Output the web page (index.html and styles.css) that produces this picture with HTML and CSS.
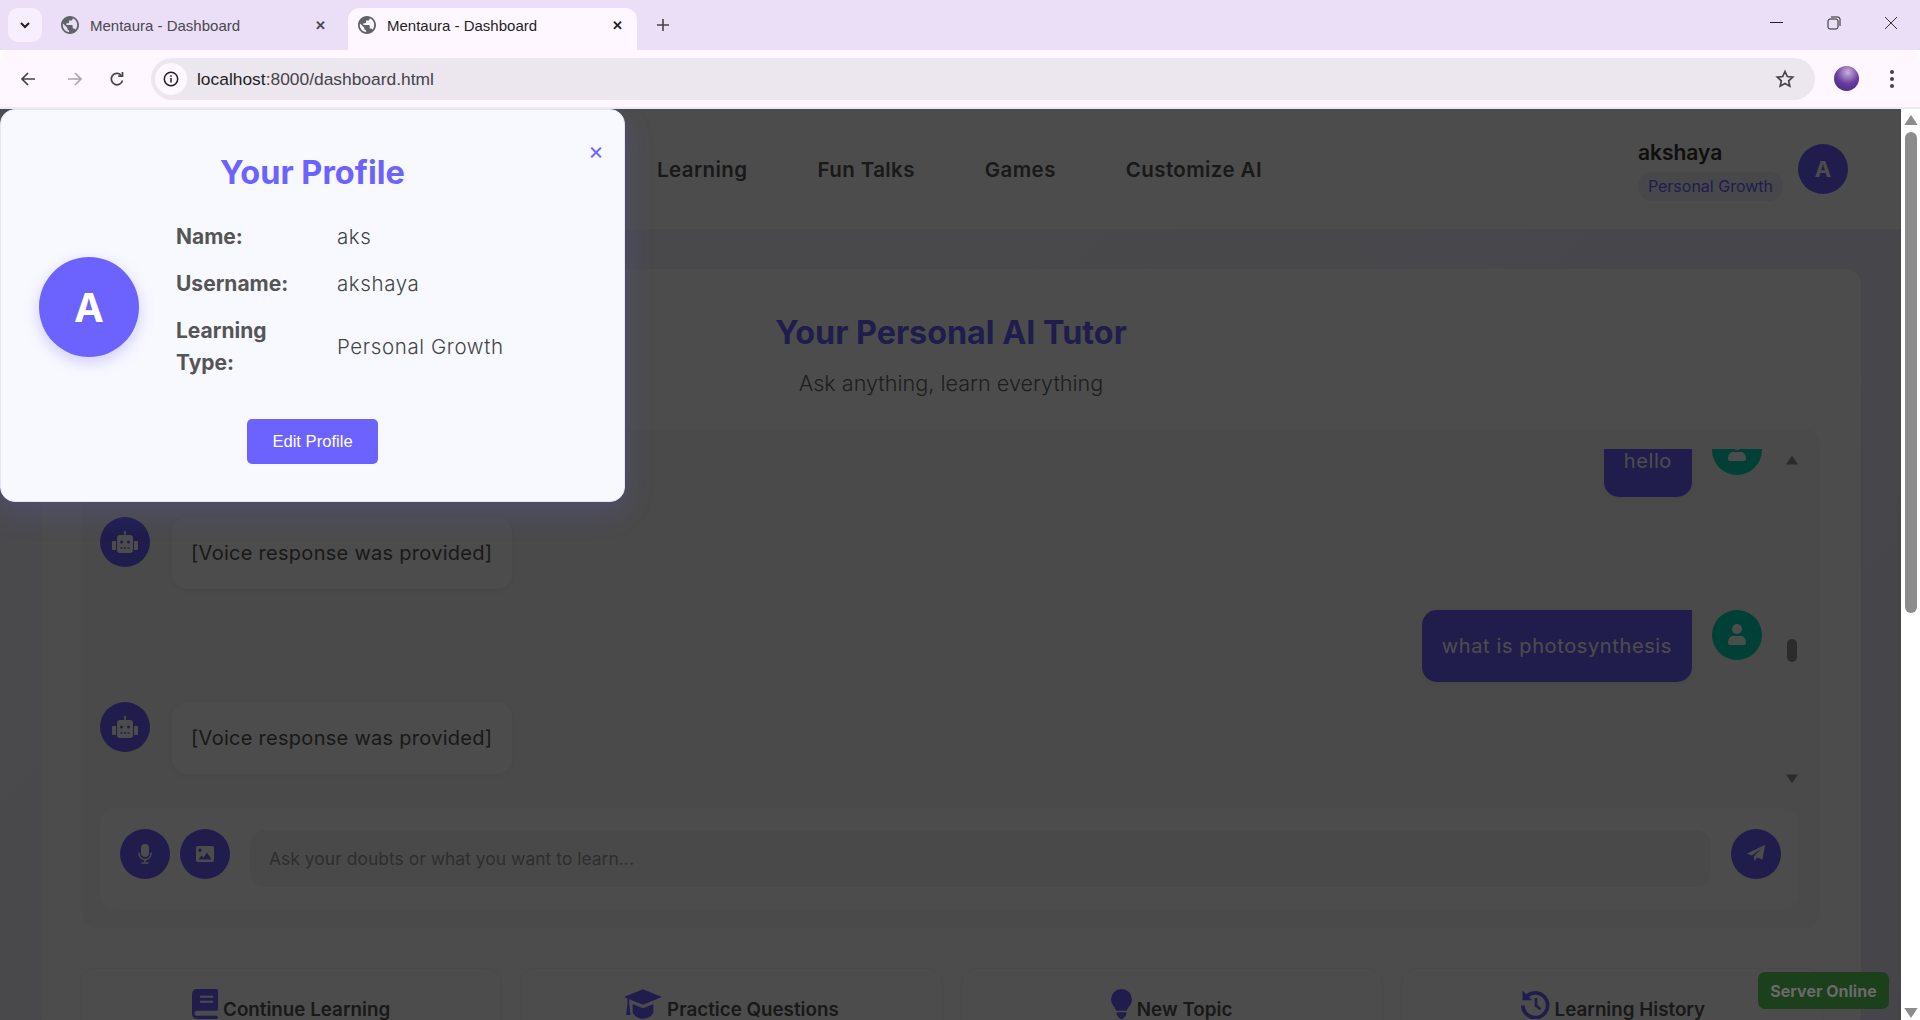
FILE: index.html
```html
<!DOCTYPE html>
<html lang="en">
<head>
    <meta charset="UTF-8">
    <title>Mentaura - Dashboard</title>
    <link rel="stylesheet" href="styles.css">
</head>
<body>
    <!-- Browser chrome -->
    <div class="tabstrip">
        <div class="tab-search">
            <svg width="12" height="12" viewBox="0 0 12 12"><path d="M2 4l4 4 4-4" fill="none" stroke="#1f1f1f" stroke-width="2"/></svg>
        </div>
        <div class="tab">
            <svg class="globe" width="18" height="18" viewBox="2 2 20 20"><path d="M12 2C6.480 2 2 6.480 2 12s4.480 10 10 10 10-4.480 10-10S17.520 2 12 2zm-1 17.930c-3.950-.49-7-3.850-7-7.930 0-.62.08-1.210.21-1.790L9 15v1c0 1.100.9 2 2 2v1.930zm6.900-2.540c-.26-.81-1-1.390-1.900-1.390h-1v-3c0-.55-.45-1-1-1H8v-2h2c.55 0 1-.45 1-1V7h2c1.100 0 2-.9 2-2v-.41c2.930 1.190 5 4.060 5 7.410 0 2.080-.8 3.970-2.100 5.390z" fill="#5f6368"/></svg>
            <span class="tab-title">Mentaura - Dashboard</span>
            <span class="tab-close">&#10005;</span>
        </div>
        <div class="tab tab-active">
            <svg class="globe" width="18" height="18" viewBox="2 2 20 20"><path d="M12 2C6.480 2 2 6.480 2 12s4.480 10 10 10 10-4.480 10-10S17.520 2 12 2zm-1 17.930c-3.950-.49-7-3.850-7-7.930 0-.62.08-1.210.21-1.790L9 15v1c0 1.100.9 2 2 2v1.930zm6.900-2.540c-.26-.81-1-1.390-1.900-1.390h-1v-3c0-.55-.45-1-1-1H8v-2h2c.55 0 1-.45 1-1V7h2c1.100 0 2-.9 2-2v-.41c2.930 1.190 5 4.060 5 7.410 0 2.080-.8 3.970-2.100 5.390z" fill="#5f6368"/></svg>
            <span class="tab-title">Mentaura - Dashboard</span>
            <span class="tab-close">&#10005;</span>
        </div>
        <div class="tab-new">
            <svg width="14" height="14" viewBox="0 0 14 14"><path d="M7 1v12M1 7h12" stroke="#444" stroke-width="1.600"/></svg>
        </div>
        <div class="window-btns">
            <svg width="14" height="14" viewBox="0 0 14 14"><path d="M0 6.500h13" stroke="#222" stroke-width="1"/></svg>
            <svg width="14" height="14" viewBox="0 0 14 14"><rect x="1" y="3" width="10" height="10" rx="2" fill="none" stroke="#222"/><path d="M4 1h7a2 2 0 0 1 2 2v7" fill="none" stroke="#222"/></svg>
            <svg width="14" height="14" viewBox="0 0 14 14"><path d="M1 1l12 12M13 1L1 13" stroke="#333" stroke-width="1"/></svg>
        </div>
    </div>
    <div class="toolbar">
        <svg class="tool-back" width="16" height="16" viewBox="0 0 16 16"><path d="M15 8H2M8 2L2 8l6 6" fill="none" stroke="#45434a" stroke-width="1.700"/></svg>
        <svg class="tool-forward" width="16" height="16" viewBox="0 0 16 16"><path d="M1 8h13M8 2l6 6-6 6" fill="none" stroke="#a8a5ac" stroke-width="1.700"/></svg>
        <svg class="tool-reload" width="16" height="16" viewBox="0 0 16 16"><path d="M13.500 9.500A5.700 5.700 0 1 1 12 4M13.500 1v4.200h-4.200" fill="none" stroke="#45434a" stroke-width="1.700"/></svg>
        <div class="omnibox">
            <div class="site-info">
                <svg width="16" height="16" viewBox="0 0 16 16"><circle cx="8" cy="8" r="6.700" fill="none" stroke="#1f1f1f" stroke-width="1.500"/><path d="M8 7v4.500M8 4.200v1.600" stroke="#1f1f1f" stroke-width="1.500"/></svg>
            </div>
            <span class="url">localhost<span class="url-rest">:8000/dashboard.html</span></span>
            <svg class="star" width="20" height="20" viewBox="0 0 20 20"><path d="M10 2.500l2.300 5 5.400.6-4 3.700 1.100 5.400-4.800-2.700-4.800 2.700 1.100-5.400-4-3.700 5.400-.6z" fill="none" stroke="#45434a" stroke-width="1.700"/></svg>
        </div>
        <div class="profile-pic"></div>
        <svg class="kebab" width="6" height="20" viewBox="0 0 6 20"><circle cx="3" cy="3" r="2" fill="#45434a"/><circle cx="3" cy="10" r="2" fill="#45434a"/><circle cx="3" cy="17" r="2" fill="#45434a"/></svg>
    </div>

    <div class="viewport">
        <div class="page">
            <header class="site-header">
                <nav class="site-nav">
                    <a>Learning</a>
                    <a>Fun Talks</a>
                    <a>Games</a>
                    <a>Customize AI</a>
                </nav>
                <div class="user-chip">
                    <div class="user-text">
                        <div class="user-name">akshaya</div>
                        <div class="user-type">Personal Growth</div>
                    </div>
                    <div class="user-avatar">A</div>
                </div>
            </header>

            <main class="main">
                <section class="tutor-card">
                    <h2 class="tutor-title">Your Personal AI Tutor</h2>
                    <p class="tutor-sub">Ask anything, learn everything</p>
                    <div class="chat-box">
                        <div class="chat-scroll">
                            <div class="messages">
                                <div class="msg msg-user">
                                    <div class="bubble bubble-user">hello</div>
                                    <div class="msg-icon icon-user"><svg width="18" height="21" viewBox="0 0 18 21"><circle cx="9" cy="5" r="5" fill="#fff"/><path d="M0 19c0-4.500 2.500-7 5-7h8c2.500 0 5 2.500 5 7a2 2 0 0 1-2 2H2a2 2 0 0 1-2-2z" fill="#fff"/></svg></div>
                                </div>
                                <div class="msg">
                                    <div class="msg-icon icon-bot"><svg width="26" height="22" viewBox="0 0 26 22"><path d="M13 0a1.300 1.300 0 0 1 .8 2.300V4H18a3 3 0 0 1 3 3v12a3 3 0 0 1-3 3H8a3 3 0 0 1-3-3V7a3 3 0 0 1 3-3h4.200V2.300A1.300 1.300 0 0 1 13 0zM1 10h3v9H1a1 1 0 0 1-1-1v-7a1 1 0 0 1 1-1zm21 0h3a1 1 0 0 1 1 1v7a1 1 0 0 1-1 1h-3z" fill="#fff"/><circle cx="9.500" cy="11" r="1.500" fill="#6c63ff"/><circle cx="16.500" cy="11" r="1.500" fill="#6c63ff"/><path d="M8.500 17h9" stroke="#6c63ff" stroke-width="1.300" stroke-dasharray="2 1.500"/></svg></div>
                                    <div class="bubble bubble-bot">[Voice response was provided]</div>
                                </div>
                                <div class="msg msg-user">
                                    <div class="bubble bubble-user">what is photosynthesis</div>
                                    <div class="msg-icon icon-user"><svg width="18" height="21" viewBox="0 0 18 21"><circle cx="9" cy="5" r="5" fill="#fff"/><path d="M0 19c0-4.500 2.500-7 5-7h8c2.500 0 5 2.500 5 7a2 2 0 0 1-2 2H2a2 2 0 0 1-2-2z" fill="#fff"/></svg></div>
                                </div>
                                <div class="msg">
                                    <div class="msg-icon icon-bot"><svg width="26" height="22" viewBox="0 0 26 22"><path d="M13 0a1.300 1.300 0 0 1 .8 2.300V4H18a3 3 0 0 1 3 3v12a3 3 0 0 1-3 3H8a3 3 0 0 1-3-3V7a3 3 0 0 1 3-3h4.200V2.300A1.300 1.300 0 0 1 13 0zM1 10h3v9H1a1 1 0 0 1-1-1v-7a1 1 0 0 1 1-1zm21 0h3a1 1 0 0 1 1 1v7a1 1 0 0 1-1 1h-3z" fill="#fff"/><circle cx="9.500" cy="11" r="1.500" fill="#6c63ff"/><circle cx="16.500" cy="11" r="1.500" fill="#6c63ff"/><path d="M8.500 17h9" stroke="#6c63ff" stroke-width="1.300" stroke-dasharray="2 1.500"/></svg></div>
                                    <div class="bubble bubble-bot">[Voice response was provided]</div>
                                </div>
                            </div>
                            <div class="chat-scrollbar">
                                <svg width="12" height="10" viewBox="0 0 12 9"><path d="M6 0l6 9H0z" fill="#909090"/></svg>
                                <div class="chat-thumb"></div>
                                <svg class="chat-down" width="12" height="10" viewBox="0 0 12 9"><path d="M0 0h12L6 9z" fill="#909090"/></svg>
                            </div>
                        </div>
                        <div class="input-row">
                            <div class="round-btn"><svg width="14" height="20" viewBox="0 0 14 20"><rect x="3" y="0" width="8" height="13" rx="4" fill="#fff"/><path d="M1 8.500v1a6 6 0 0 0 12 0v-1" fill="none" stroke="#fff" stroke-width="1.400"/><path d="M7 15v3M3.500 19h7" stroke="#fff" stroke-width="1.600"/></svg></div>
                            <div class="round-btn"><svg width="18" height="16" viewBox="0 0 18 16"><path d="M2 0h14a2 2 0 0 1 2 2v12a2 2 0 0 1-2 2H2a2 2 0 0 1-2-2V2a2 2 0 0 1 2-2zm2 2.500a1.800 1.800 0 1 0 0 3.600 1.800 1.800 0 0 0 0-3.600zM2.500 13.500h13L11 6.500l-3.500 5-2-2z" fill="#fff" fill-rule="evenodd"/></svg></div>
                            <div class="chat-input">Ask your doubts or what you want to learn...</div>
                            <div class="round-btn"><svg width="18" height="18" viewBox="0 0 18 18"><path d="M18 0L15.500 14.500 10 12.500 7.500 16 6.800 11.500 14.500 3.500 4.800 10.500 0 8.500z" fill="#fff"/></svg></div>
                        </div>
                    </div>

                    <div class="actions">
                        <div class="action-card">
                            <svg class="action-icon" width="26" height="30" viewBox="0 0 16 18" preserveAspectRatio="none"><path d="M3 0h12a1 1 0 0 1 1 1v11a1 1 0 0 1-1 1H3a1.500 1.500 0 0 0 0 3h12a1 1 0 0 1 1 1v0a1 1 0 0 1-1 1H3a3 3 0 0 1-3-3V3a3 3 0 0 1 3-3zm2 4v1.300h8V4zm0 3v1.300h8V7z" fill="#6c63ff" fill-rule="evenodd"/></svg>
                            <span>Continue Learning</span>
                        </div>
                        <div class="action-card">
                            <svg class="action-icon" width="38" height="30" viewBox="0 0 22 17"><path d="M11 0l11 4.500-11 4.500-8-3.200v2.500l.8 6.500H1.200l.8-6.500V5.300L0 4.500zM5 8.500l6 2.500 6-2.500V13c0 2-3 4-6 4s-6-2-6-4z" fill="#6c63ff"/></svg>
                            <span>Practice Questions</span>
                        </div>
                        <div class="action-card">
                            <svg class="action-icon" width="21" height="30" viewBox="0 0 14 20"><path d="M7 0a7 7 0 0 1 7 7c0 2.500-1.500 4-2.500 5.500-.5.800-.8 1.300-1 2H3.500c-.2-.7-.5-1.200-1-2C1.500 11 0 9.500 0 7a7 7 0 0 1 7-7zM3.800 15.500h6.400v1.500a3 3 0 0 1-1.500 2l-.7 1H6l-.7-1a3 3 0 0 1-1.500-2z" fill="#6c63ff"/></svg>
                            <span>New Topic</span>
                        </div>
                        <div class="action-card">
                            <svg class="action-icon" width="31" height="30" viewBox="0 0 20 20"><path d="M4.500 3.500A9.500 9.500 0 1 1 1 11h2.500a7 7 0 1 0 2.700-5.700L8.500 7.500H2V1z" fill="#6c63ff"/><path d="M11 6v5l3 2.500" fill="none" stroke="#6c63ff" stroke-width="1.800"/></svg>
                            <span>Learning History</span>
                        </div>
                    </div>
                </section>
            </main>
        </div>

        <div class="overlay"></div>

        <div class="server-status">Server Online</div>

        <!-- Profile modal -->
        <div class="profile-modal">
            <span class="modal-close">&times;</span>
            <h2 class="modal-title">Your Profile</h2>
            <div class="modal-body">
                <div class="modal-avatar">A</div>
                <div class="modal-info">
                    <div class="info-row"><span class="info-label">Name:</span><span class="info-value">aks</span></div>
                    <div class="info-row"><span class="info-label">Username:</span><span class="info-value">akshaya</span></div>
                    <div class="info-row"><span class="info-label">Learning Type:</span><span class="info-value">Personal Growth</span></div>
                </div>
            </div>
            <div class="modal-actions"><button class="edit-btn">Edit Profile</button></div>
        </div>

        <div class="page-scrollbar">
            <svg width="14" height="10" viewBox="0 0 12 9"><path d="M6 0l6 9H0z" fill="#8c8c8c"/></svg>
            <div class="page-thumb"></div>
            <svg class="sb-down" width="14" height="10" viewBox="0 0 12 9"><path d="M0 0h12L6 9z" fill="#8c8c8c"/></svg>
        </div>
    </div>
</body>
</html>
```
FILE: styles.css
```css
/* General */
* {
    box-sizing: border-box;
}

html, body {
    margin: 0;
    height: 100%;
    overflow: hidden;
}

body {
    font-family: Inter, "Open Sans", sans-serif;
    display: flex;
    flex-direction: column;
}

/* Browser tabs */
.tabstrip {
    height: 50px;
    background: #ebdef7;
    display: flex;
    align-items: flex-start;
    padding: 8px 0 0 8px;
    flex-shrink: 0;
}

.tab-search {
    width: 34px;
    height: 34px;
    background: #f7effd;
    border-radius: 10px;
    display: flex;
    align-items: center;
    justify-content: center;
    margin-right: 6px;
}

.tab {
    width: 300px;
    height: 42px;
    display: flex;
    align-items: center;
    padding: 0 18px 8px 13px;
    font-family: "Liberation Sans", Arial, sans-serif;
    font-size: 15px;
    color: #4a4750;
}

.tab-active {
    width: 289px;
    background: #fef7ff;
    border-radius: 12px 12px 0 0;
    color: #1f1f1f;
    padding: 0 10px 8px 10px;
}

.globe {
    flex-shrink: 0;
}

.tab-title {
    flex: 1;
    margin-left: 11px;
}

.tab-close {
    font-size: 13px;
    font-weight: bold;
    width: 20px;
    text-align: center;
}

.tab-new {
    margin-left: 19px;
    padding-top: 8px;
    height: 26px;
}

.window-btns {
    margin-left: auto;
    display: flex;
    gap: 43px;
    padding: 8px 22px 0 0;
}

/* Browser toolbar */
.toolbar {
    height: 59px;
    background: #fef7ff;
    border-radius: 12px 12px 0 0;
    display: flex;
    align-items: center;
    padding: 0 0 0 20px;
    flex-shrink: 0;
    border-bottom: 2px solid #f0e9f5;
}

.toolbar svg {
    flex-shrink: 0;
}

.tool-forward {
    margin-left: 31px;
}

.tool-reload {
    margin-left: 26px;
}

.omnibox {
    width: 1664px;
    height: 42px;
    margin-left: 26px;
    background: #ece6ee;
    border-radius: 21px;
    display: flex;
    align-items: center;
    padding: 0 20px 0 4px;
}

.site-info {
    width: 32px;
    height: 32px;
    border-radius: 50%;
    background: #fef7ff;
    display: flex;
    align-items: center;
    justify-content: center;
}

.url {
    margin-left: 10px;
    padding-top: 2px;
    font-family: "Liberation Sans", Arial, sans-serif;
    font-size: 17.400px;
    color: #1f1f1f;
    flex: 1;
}

.url-rest {
    color: #45434a;
}

.profile-pic {
    width: 25px;
    height: 25px;
    border-radius: 50%;
    background: radial-gradient(circle at 55% 25%, #c9b3da, #6a3a9e 50%, #3b2a70);
    margin-left: 19px;
}

.kebab {
    margin-left: 30px;
}

/* Page area */
.viewport {
    flex: 1;
    position: relative;
    overflow: hidden;
    background: #fff;
}

.page {
    width: 1901px;
    height: 911px;
    overflow: hidden;
    background: linear-gradient(135deg, #fbfbff, #e8e6f8);
}

.overlay {
    position: absolute;
    top: 0;
    left: 0;
    width: 1901px;
    bottom: 0;
    background: rgba(0, 0, 0, 0.7);
}

.site-header {
    height: 120px;
    background: #fff;
    display: flex;
    align-items: center;
    justify-content: space-between;
    padding: 0 41px 0 657px;
}

.site-nav {
    display: flex;
    gap: 70px;
    font-size: 20.500px;
    letter-spacing: 0.4px;
    font-weight: 600;
    color: #555;
}

.user-chip {
    display: flex;
    align-items: center;
    gap: 15px;
    height: 85px;
    padding: 0 12px 0 18px;
    border-radius: 40px;
    background: #fdfdfd;
}

.user-text {
    padding-top: 3px;
}

.user-name {
    font-size: 21px;
    line-height: 26px;
    font-weight: 600;
    color: #333;
}

.user-type {
    margin-top: 6px;
    height: 29px;
    line-height: 29px;
    padding: 0 10px;
    font-size: 16px;
    border-radius: 14px;
    color: #6c63ff;
    background: #f1f0fb;
}

.user-avatar {
    width: 50px;
    height: 50px;
    border-radius: 50%;
    background: #6c63ff;
    color: #fff;
    font-size: 22px;
    font-weight: 700;
    display: flex;
    align-items: center;
    justify-content: center;
}

.main {
    padding: 40px 40px 0 41px;
}

/* Tutor card */
.tutor-card {
    height: 760px;
    background: #fff;
    border-radius: 15px;
    padding: 44px 41px 0;
}

.tutor-title {
    margin: 0;
    text-align: center;
    font-size: 32.300px;
    line-height: 40px;
    font-weight: 700;
    color: #6c63ff;
}

.tutor-sub {
    margin: 15px 0 0;
    text-align: center;
    font-size: 21.600px;
    line-height: 30px;
    font-weight: 300;
    color: #666;
}

.chat-box {
    margin-top: 31px;
    height: 499px;
    border-radius: 15px;
    background: #f8f8f8;
    padding: 20px 21px 0 18px;
}

.chat-scroll {
    height: 339px;
    display: flex;
    overflow: hidden;
}

.messages {
    flex: 1;
    display: flex;
    flex-direction: column;
    gap: 20.300px;
    margin-top: -24px;
    padding-right: 23px;
}

.msg {
    display: flex;
    gap: 22px;
}

.msg-user {
    gap: 20px;
    justify-content: flex-end;
}

.msg-icon {
    width: 50px;
    height: 50px;
    border-radius: 50%;
    display: flex;
    align-items: center;
    justify-content: center;
    flex-shrink: 0;
}

.icon-bot {
    background: #6c63ff;
}

.icon-user {
    background: #00d8b4;
}

.bubble {
    height: 72px;
    padding: 0 20px;
    display: flex;
    align-items: center;
    font-size: 20px;
    border-radius: 15px;
}

.bubble-bot {
    padding: 0 20px 0 19px;
    background: #fdfdfd;
    color: #555;
    letter-spacing: 0.28px;
    box-shadow: 0 2px 6px rgba(0, 0, 0, 0.06);
}

.bubble-user {
    background: #6c63ff;
    color: #fff;
    letter-spacing: 0.62px;
    border-top-right-radius: 0;
    box-shadow: 0 2px 6px rgba(0, 0, 0, 0.06);
}

.chat-scrollbar {
    width: 14px;
    display: flex;
    flex-direction: column;
    align-items: center;
    padding: 6px 0 4px;
}

.chat-thumb {
    width: 10px;
    height: 23px;
    margin-top: 174px;
    border-radius: 5px;
    background: #909090;
}

.chat-down {
    margin-top: auto;
}

.input-row {
    height: 101px;
    display: flex;
    align-items: flex-start;
    gap: 10px;
    padding: 21px 18px 0 20px;
    border-radius: 15px;
    background: #fdfdfd;
    margin-top: 20px;
}

.round-btn {
    width: 50px;
    height: 50px;
    border-radius: 50%;
    background: #6c63ff;
    display: flex;
    align-items: center;
    justify-content: center;
    flex-shrink: 0;
}

.chat-input {
    flex: 1;
    height: 57px;
    margin: 1px 10px 0;
    border-radius: 15px;
    background: #f5f5f5;
    padding: 0 19px;
    display: flex;
    align-items: center;
    font-size: 17.500px;
    color: #999;
}

/* Bottom actions */
.actions {
    margin: 40px -3px 0 -2px;
    display: grid;
    grid-template-columns: repeat(4, 1fr);
    gap: 18px;
}

.action-card {
    height: 120px;
    border-radius: 15px 15px 0 0;
    background: #fdfdfd;
    border: 1px solid #f4f4f4;
    padding-top: 20px;
    display: flex;
    justify-content: center;
    align-items: flex-start;
    gap: 5px;
    font-size: 18.800px;
    line-height: 23px;
    font-weight: 600;
    color: #555;
}

.action-card span {
    margin-top: 9px;
}

.action-icon {
    flex-shrink: 0;
}

/* Overlaid bits */
.server-status {
    position: absolute;
    left: 1758px;
    top: 863px;
    width: 131px;
    height: 37px;
    border-radius: 7px;
    background: #1c3f1c;
    color: #6a6a6a;
    font-size: 16px;
    font-weight: 700;
    display: flex;
    align-items: center;
    justify-content: center;
}

.profile-modal {
    position: absolute;
    left: 0;
    top: 0;
    width: 625px;
    height: 393px;
    background: #f8f9ff;
    border: 1px solid #e6e3ff;
    border-radius: 15px;
    padding: 45px 38px 0 38px;
    box-shadow: 0 10px 30px rgba(108, 99, 255, 0.2);
}

.modal-close {
    position: absolute;
    top: 29px;
    right: 20px;
    font-size: 24px;
    line-height: 24px;
    color: #6c63ff;
}

.modal-title {
    margin: 0;
    text-align: center;
    font-size: 32.500px;
    line-height: 36px;
    font-weight: 700;
    color: #6c63ff;
}

.modal-body {
    display: flex;
    align-items: flex-start;
    margin-top: 22.500px;
    gap: 37px;
}

.modal-avatar {
    width: 100px;
    height: 100px;
    margin-top: 43.500px;
    border-radius: 50%;
    background: #6c63ff;
    color: #fff;
    font-size: 40px;
    font-weight: 700;
    display: flex;
    align-items: center;
    justify-content: center;
    box-shadow: 0 5px 15px rgba(108, 99, 255, 0.3);
    flex-shrink: 0;
}

.modal-info {
    flex: 1;
    display: flex;
    flex-direction: column;
}

.info-row {
    display: grid;
    grid-template-columns: 161px 1fr;
    align-items: center;
    padding: 7.500px 0;
    font-size: 20.500px;
    line-height: 32px;
    color: #555;
}

.info-label {
    font-weight: 700;
    font-size: 21px;
    width: 120px;
}

.info-value {
    font-weight: 300;
    color: #444;
    letter-spacing: 0.6px;
}

.modal-actions {
    display: flex;
    justify-content: center;
    margin-top: 32.500px;
}

.edit-btn {
    width: 131px;
    height: 45px;
    border: 0;
    border-radius: 5px;
    background: #6c63ff;
    color: #fff;
    font-family: "Liberation Sans", Arial, sans-serif;
    font-size: 16.600px;
}

.page-scrollbar {
    position: absolute;
    top: 0;
    right: 0;
    width: 19px;
    bottom: 0;
    background: #fff;
    display: flex;
    flex-direction: column;
    align-items: center;
    padding-top: 6px;
}

.page-thumb {
    width: 12px;
    height: 481px;
    margin-top: 7px;
    border-radius: 6px;
    background: #8c8c8c;
}

.sb-down {
    margin-top: auto;
    margin-bottom: 2px;
}
```
